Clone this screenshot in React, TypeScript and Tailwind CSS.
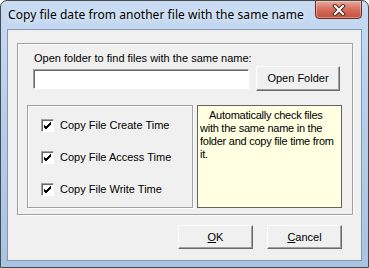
import React from "react";

function Btn({ children, className = "" }: { children: React.ReactNode; className?: string }) {
  return (
    <div
      className={`flex items-center justify-center bg-[#f0f0f0] border border-t-white border-l-white border-r-[#696969] border-b-[#696969] shadow-[inset_-1px_-1px_0_#a0a0a0] ${className}`}
    >
      {children}
    </div>
  );
}

function Check({ label }: { label: string }) {
  return (
    <div className="flex items-center gap-[6px]">
      <div className="w-[13px] h-[13px] bg-white border border-t-[#a0a0a0] border-l-[#a0a0a0] border-r-white border-b-white shadow-[inset_1px_1px_0_#696969] flex items-center justify-center">
        <svg width="9" height="9" viewBox="0 0 9 9">
          <path d="M1 4 L3 6 L8 1 M1 5 L3 7 L8 2 M1 6 L3 8 L8 3" stroke="#000" strokeWidth="1" fill="none" />
        </svg>
      </div>
      <span>{label}</span>
    </div>
  );
}

export default function App() {
  return (
    <div className="w-[369px] h-[268px] flex flex-col rounded-t-[7px] border border-[#4a4a4a] bg-gradient-to-b from-[#c7dbf2] via-[#b4cdea] to-[#a9c4e4] font-['Liberation_Sans',sans-serif] text-[11px] leading-[13px] text-black overflow-hidden">
      {/* title bar */}
      <div className="h-[28px] flex items-start justify-between pl-[7px] pr-[6px]">
        <div className="pt-[6px] font-['Noto_Sans',sans-serif] text-[12px] leading-[16px] tracking-[0.05px] [text-shadow:0_0_6px_#fff]">
          Copy file date from another file with the same name
        </div>
        <div className="w-[47px] h-[19px] -mt-px rounded-b-[4px] border border-[#6b2c22] bg-gradient-to-b from-[#e9aa9d] via-[#d56e5b] to-[#c4503b] shadow-[inset_0_0_0_1px_rgba(255,255,255,0.35)] flex items-center justify-center">
          <svg width="14" height="12" viewBox="0 0 14 12">
            <path d="M3 2 L11 10 M11 2 L3 10" stroke="#4a2a25" strokeWidth="4" strokeLinecap="square" />
            <path d="M3 2 L11 10 M11 2 L3 10" stroke="#fff" strokeWidth="2" strokeLinecap="square" />
          </svg>
        </div>
      </div>

      {/* client area */}
      <div className="flex-1 mx-[6px] mb-[6px] bg-[#f0f0f0] border border-[#8597b0] flex flex-col">
        <div className="mt-[13px] ml-[9px] mr-[8px] h-[172px] border border-[#a0a0a0] shadow-[inset_1px_1px_0_#fff,1px_1px_0_#fff] flex flex-col">
          <div className="pt-[8px] pl-[16px]">Open folder to find files with the same name:</div>
          <div className="flex items-center mt-[1px] pl-[15px] pr-[10px]">
            <div className="w-[216px] h-[20px] bg-white border border-t-[#a0a0a0] border-l-[#a0a0a0] border-r-white border-b-white shadow-[inset_1px_1px_0_#696969]" />
            <Btn className="ml-[7px] w-[84px] h-[25px]">Open Folder</Btn>
          </div>
          <div className="flex mt-[14px] pl-[9px] gap-[4px]">
            <div className="w-[166px] h-[103px] border border-[#a0a0a0] shadow-[inset_1px_1px_0_#fff,1px_1px_0_#fff] flex flex-col gap-[19px] pt-[13px] pl-[13px]">
              <Check label="Copy File Create Time" />
              <Check label="Copy File Access Time" />
              <Check label="Copy File Write Time" />
            </div>
            <div className="w-[145px] h-[103px] bg-[#ffffe1] border border-[#646464] pl-[2px] pr-0 pt-[3px] leading-[13px] indent-[9px] tracking-[-0.25px]">
              Automatically check files with the same name in the folder and copy file time from it.
            </div>
          </div>
        </div>
        <div className="flex justify-end gap-[14px] mt-[10px] pr-[19px]">
          <Btn className="w-[75px] h-[24px]">
            <span><span className="underline">O</span>K</span>
          </Btn>
          <Btn className="w-[75px] h-[24px]">
            <span><span className="underline">C</span>ancel</span>
          </Btn>
        </div>
      </div>
    </div>
  );
}
